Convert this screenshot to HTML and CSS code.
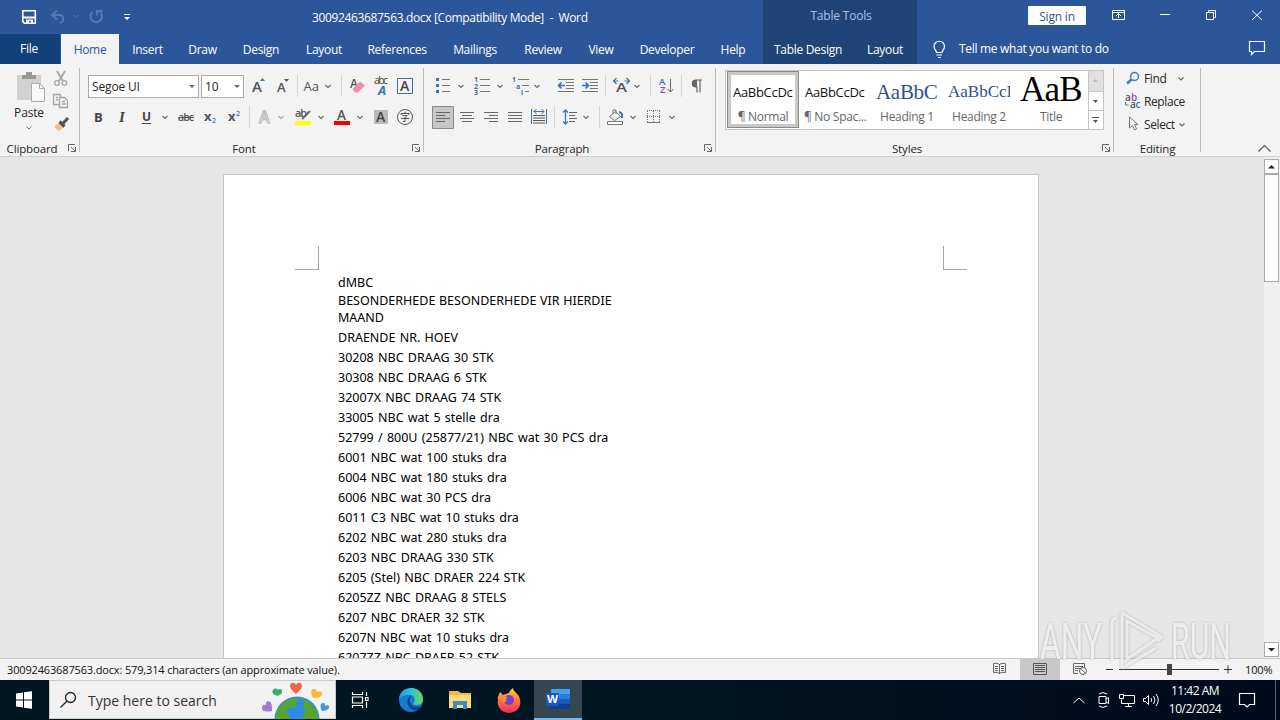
FILE: index.html
```html
<!DOCTYPE html>
<html lang="en"><head><meta charset="utf-8"><title>Word</title><link rel="stylesheet" href="styles.css"></head>
<body>
<header class="head">
 <div class="titlebar">
  <svg width="48" height="34" viewBox="0 0 48 34"><path d="M22.800 10.800h12.500v12.500H24.500l-1.700-1.700z" fill="none" stroke="#fff" stroke-width="1.600"/><path d="M22.500 16.500h13v2h-13zM26 19.500h7V23h-2v-2h-2v2h-3z" fill="#fff"/></svg>
  <svg width="36" height="34" viewBox="48 0 36 34" fill="none" stroke="#5578b3" stroke-width="2"><path d="M57 10.500l-5 4.500 5 4.500M52 15h7c5 0 6 6 1 8"/><path d="M73 15l2.500 2.500L78 15" stroke-width="1"/></svg>
  <svg width="32" height="34" viewBox="84 0 32 34" fill="none" stroke="#5578b3" stroke-width="2"><path d="M92.500 12a5.800 5.800 0 1 0 7.500 0M97 15.500V11h5.500"/></svg>
  <svg width="24" height="34" viewBox="116 0 24 34" fill="#fff"><path d="M124 14h6v1h-6zM124 17h6l-3 3z"/></svg>
  <div class="doctitle">30092463687563.docx [Compatibility Mode]  -  Word</div>
  <div class="ctxtitle">Table Tools</div>
  <button class="signin">Sign in</button>
  <svg width="194" height="34" viewBox="1086 0 194 34" fill="none" stroke="#fff"><path d="M1112.500 10.500h12v9h-12zM1112.500 12.500h12M1118.500 18v-4M1116 16l2.500-2.500 2.500 2.500M1160 14.500h10M1206.500 12.500h7v7h-7zM1208.500 12v-1.500h7v7h-2M1252 10.500l10 9.500M1262 10.500l-10 9.500"/></svg>
 </div>
 <nav class="tabs">
  <span class="file">File</span><span class="home">Home</span><span style="width:57px">Insert</span><span style="width:53px">Draw</span><span style="width:64px">Design</span><span style="width:62px">Layout</span><span style="width:84px">References</span><span style="width:72px">Mailings</span><span style="width:64px">Review</span><span style="width:52px">View</span><span style="width:80px">Developer</span><span style="width:52px">Help</span>
  <div class="ctx"><span style="width:90px">Table Design</span><span style="width:64px">Layout</span></div>
  <svg width="42" height="30" viewBox="917 34 42 30" fill="none" stroke="#fff" stroke-width="1.200"><path d="M936.500 52.500c0-2-2.500-3-2.500-6a5 5 0 0 1 10.500 0c0 3-2.500 4-2.500 6zM936.500 55h5.500M938 57.500h3"/></svg>
  <em>Tell me what you want to do</em>
  <svg width="40" height="30" viewBox="1240 34 40 30" fill="none" stroke="#fff" stroke-width="1.200"><path d="M1249.500 41.500h15v10h-10l-3 3v-3h-2z"/></svg>
 </nav>
</header>
<section class="ribbon">
 <div class="group clip"><div class="gbody cols">
   <div class="paste"><svg width="50" height="42" viewBox="4 64 50 42"><path d="M17 75h24v25H17z" fill="#d3d0d0"/><path d="M22 75h14v4H22zM26 72h6v4h-6z" fill="#999"/><path d="M31.500 83.500h8l5 5v13h-13z" fill="#fafafa" stroke="#aaa"/><path d="M39.500 83.500v5h5" fill="none" stroke="#aaa"/></svg><b>Paste</b><svg width="50" height="12" viewBox="4 122 50 12"><path d="M26.500 126.500l2.500 2.500 2.500-2.500" fill="none" stroke="#777"/></svg></div>
   <svg width="25" height="76" viewBox="50 64 25 76" fill="none" stroke="#a5a5a5" stroke-width="1.300"><path d="M57 71l6 10M65 71l-6 10" stroke-width="1.800"/><circle cx="57" cy="83" r="2.300"/><circle cx="64.500" cy="83" r="2.300"/><path d="M59 104.500h-5.500v-10h6l2 2M56 97.500h2M56 100h2M59.500 97.500h5l3 3v7h-8zM62 101.500h3M62 104h4"/><path d="M54.500 126l5-3 4 4-4 4q-4-1-5-5z" fill="#efc281" stroke="none"/><path d="M59.500 121.500l5 5M62.500 124l5.500-6" stroke="#555" stroke-width="3.200"/></svg>
  </div><div class="glabel"><span>Clipboard</span><svg class="launch" viewBox="0 0 16 16"><path d="M4.500 11V4.500H11M7 7l4 4M11.500 7v4.500H7"/></svg></div></div>
 <div class="group font"><div class="gbody">
   <div class="row r1"><div class="combo name"><span>Segoe UI</span><i></i></div><div class="combo size"><span>10</span><i></i></div>
    <svg width="54" height="24" viewBox="244 74 54 24" font-weight="600" fill="#555"><text x="252" y="92" font-size="15">A</text><text x="277" y="92" font-size="13">A</text><path d="M260 81l2.500-3 2.500 3z" fill="#4472c4"/><path d="M284 79h5l-2.500 3z"/><path d="M297.500 75v22" stroke="#d5d5d5"/></svg>
    <svg width="45" height="24" viewBox="298 74 45 24"><text x="303.500" y="91" font-size="13" font-weight="500" fill="#555">Aa</text><path d="M325.500 85l2.500 2.500 2.500-2.500" class="car"/><path d="M341.500 75v22" stroke="#d5d5d5"/></svg>
    <svg width="26" height="24" viewBox="343 74 26 24"><text x="350" y="88" font-size="12" font-weight="600" fill="#555">A</text><path d="M352.500 89l7.500-7.500 5 4-7 7h-3z" fill="#ef8da5"/></svg>
    <svg width="25" height="24" viewBox="369 74 25 24"><text x="374" y="84" font-size="10.500" fill="#444" textLength="14">abc</text><text x="378" y="94.500" font-size="13" font-weight="700" font-style="italic" fill="#3a74b4">A</text></svg>
    <svg width="24" height="24" viewBox="394 74 24 24"><path d="M397.500 78.500h15v15h-15z" fill="none" stroke="#3f6ca8"/><text x="400" y="91" font-size="14" font-weight="600" fill="#444">A</text></svg></div>
   <div class="row r2">
    <svg width="84" height="24" viewBox="88 105 84 24" fill="#444" font-weight="700" font-size="13"><text x="94" y="121.500">B</text><text x="119" y="122" font-style="italic" font-family="Liberation Serif" font-size="15">I</text><text x="142" y="121" font-size="12">U</text><path d="M142 123.500h9" stroke="#444"/><path d="M162.500 116l2.500 2.500 2.500-2.500" class="car"/></svg>
    <svg width="80" height="24" viewBox="172 105 80 24" fill="#555" font-weight="600"><text x="178" y="121" font-size="10.500" textLength="16">abc</text><path d="M178 117.500h16" stroke="#555"/><text x="204" y="121" font-size="13" font-weight="700">x</text><text x="212" y="123" font-size="7" fill="#3a74b4">2</text><text x="228" y="121" font-size="13" font-weight="700">x</text><text x="236" y="115.500" font-size="7" fill="#3a74b4">2</text><path d="M249.500 106v22" stroke="#d5d5d5"/></svg>
    <svg width="36" height="24" viewBox="252 105 36 24"><text x="259" y="122.500" font-size="16" font-weight="600" fill="#eee" stroke="#b5b5b5">A</text><path d="M278.500 116l2.500 2.500 2.500-2.500" class="car" opacity=".5"/></svg>
    <svg width="40" height="24" viewBox="288 105 40 24"><text x="295" y="117" font-size="11" font-weight="600" fill="#555" textLength="12">ab</text><path d="M302 119l8-8" stroke="#666" stroke-width="2"/><path d="M295 121h16v4h-16z" fill="#ff0"/><path d="M318.500 116l2.500 2.500 2.500-2.500" class="car"/></svg>
    <svg width="42" height="24" viewBox="328 105 42 24"><text x="337" y="120" font-size="13.500" font-weight="600" fill="#555">A</text><path d="M334 121h16v4h-16z" fill="#f00000"/><path d="M357.500 116l2.500 2.500 2.500-2.500" class="car"/></svg>
    <svg width="24" height="24" viewBox="370 105 24 24"><path d="M374 110h14v14h-14z" fill="#bbb"/><text x="376" y="122" font-size="14" font-weight="600" fill="#444">A</text></svg>
    <svg width="24" height="24" viewBox="394 105 24 24"><circle cx="405" cy="117" r="7.500" fill="none" stroke="#555"/><text x="400" y="120.500" font-size="10" font-family="Noto Sans CJK SC" fill="#333">字</text></svg></div>
  </div><div class="glabel"><span>Font</span><svg class="launch" viewBox="0 0 16 16"><path d="M4.500 11V4.500H11M7 7l4 4M11.500 7v4.500H7"/></svg></div></div>
 <div class="group para"><div class="gbody">
   <div class="row r1">
    <svg width="40" height="24" viewBox="430 74 40 24" fill="none" stroke="#777"><path d="M442 79.500h8M442 85.500h8M442 91.500h8"/><path d="M436 79.500h3M436 85.500h3M436 91.500h3" stroke="#3a6fb0" stroke-width="3"/><path d="M458.500 85l2.500 2.500 2.500-2.500" class="car"/></svg>
    <svg width="38" height="24" viewBox="470 74 38 24" font-size="7" font-weight="700" fill="#3a6fb0"><text x="474" y="82">1</text><text x="474" y="88.500">2</text><text x="474" y="95">3</text><path d="M480 79.500h10M480 85.500h10M480 91.500h10" stroke="#777"/><path d="M497.500 85l2.500 2.500 2.500-2.500" class="car"/></svg>
    <svg width="44" height="24" viewBox="508 74 44 24" font-size="7" font-weight="700" fill="#3a6fb0"><text x="512" y="82">1</text><text x="516" y="88.500">a</text><text x="521" y="95">i</text><path d="M518 79.500h11M522 85.500h7M525 91.500h4" stroke="#777"/><path d="M534.500 85l2.500 2.500 2.500-2.500" class="car"/></svg>
    <svg width="52" height="24" viewBox="552 74 52 24" fill="none" stroke="#777"><path d="M558 79.500h16M566 82.500h8M566 85.500h8M566 88.500h8M558 91.500h16M582 79.500h16M590 82.500h8M590 85.500h8M590 88.500h8M582 91.500h16"/><path d="M565 85.500h-6m2.500-3l-3 3 3 3M582 85.500h6m-2.500-3l3 3-3 3" stroke="#3a74b4" stroke-width="1.700"/></svg>
    <svg width="44" height="24" viewBox="604 74 44 24"><path d="M605.500 75v22" stroke="#d5d5d5"/><text x="616" y="92" font-size="13" font-weight="600" fill="#555" textLength="11" lengthAdjust="spacingAndGlyphs">A</text><path d="M616.500 78l-3 3 3 3M613.500 81h5M626.500 78l3 3-3 3M629.500 81h-5" fill="none" stroke="#3a74b4" stroke-width="1.200"/><path d="M634.500 85l2.500 2.500 2.500-2.500" class="car"/></svg>
    <svg width="34" height="24" viewBox="648 74 34 24" font-size="9.500" font-weight="600"><path d="M650.500 75v22M681.500 75v22" stroke="#d5d5d5"/><text x="659" y="84.500" fill="#3a6fb0">A</text><text x="660" y="93" fill="#8854b5">Z</text><path d="M670.500 79v13m-2.800-3l2.800 3 2.800-3" fill="none" stroke="#666"/></svg>
    <svg width="30" height="24" viewBox="682 74 30 24"><path d="M702 80h-6a3.500 3.500 0 0 0 0 7h1v5.500M700 80v12.500" fill="none" stroke="#666" stroke-width="1.200"/><path d="M697 80h-2a3 3.500 0 0 0 0 7h2z" fill="#666"/></svg>
   </div>
   <div class="row r2">
    <svg width="26" height="24" viewBox="430 105 26 24" fill="none" stroke="#666"><path d="M432.500 106.500h21v22h-21z" fill="#c6c6c6" stroke="#8b8b8b"/><path d="M436 112.500h14M436 115.500h9M436 118.500h14M436 121.500h9"/></svg>
    <svg width="72" height="24" viewBox="456 105 72 24" stroke="#666"><path d="M460 112.500h14M462 115.500h10M460 118.500h14M462 121.500h10M484 112.500h14M489 115.500h9M484 118.500h14M489 121.500h9M508 112.500h14M508 115.500h14M508 118.500h14M508 121.500h14"/></svg>
    <svg width="26" height="24" viewBox="528 105 26 24" fill="none" stroke="#555"><path d="M533 115.500h12M533 118h12M533 120.500h12M533 123h12"/><path d="M531.500 109v15M546.500 109v15M534 111.500h10m-2.500-2.500l2.500 2.500-2.500 2.500M536.500 109l-2.500 2.500 2.500 2.500" stroke="#3a74b4"/></svg>
    <svg width="46" height="24" viewBox="554 105 46 24" fill="none" stroke="#666"><path d="M554.500 106v22M599.500 106v22" stroke="#d5d5d5"/><path d="M569 112.500h8M569 115.500h6M569 118.500h8M569 121.500h6"/><path d="M565.500 110v14m-2.500-11.500l2.500-2.500 2.500 2.500m-5 9l2.500 2.500 2.500-2.500" stroke="#3a74b4" stroke-width="1.300"/><path d="M583.500 116l2.500 2.500 2.500-2.500" class="car"/></svg>
    <svg width="44" height="24" viewBox="600 105 44 24" fill="none" stroke="#777"><path d="M609.500 116.500l6-5 5 5-6 4zM613 114v-4h3v4"/><path d="M619 112q4 1 3 6" stroke="#3a6fb0" stroke-width="2"/><path d="M607.500 121.500h15v3h-15z" fill="#fff"/><path d="M630.500 116l2.500 2.500 2.500-2.500" class="car"/></svg>
    <svg width="42" height="24" viewBox="644 105 42 24" fill="none" stroke="#777"><path d="M647.500 111v12M659.500 111v12M647 110.500h13M653.500 111v12M647 116.500h13" stroke-dasharray="1 1"/><path d="M647 122.500h13"/><path d="M669.500 116l2.500 2.500 2.500-2.500" class="car"/></svg>
   </div>
  </div><div class="glabel"><span>Paragraph</span><svg class="launch" viewBox="0 0 16 16"><path d="M4.500 11V4.500H11M7 7l4 4M11.500 7v4.500H7"/></svg></div></div>
 <div class="group styles"><div class="gbody">
   <div class="gallery">
    <div class="style sel"><p>AaBbCcDc</p><span>¶ Normal</span></div><div class="style"><p>AaBbCcDc</p><span>¶ No Spac...</span></div><div class="style h1"><p>AaBbC</p><span>Heading 1</span></div><div class="style h2"><p>AaBbCcI</p><span>Heading 2</span></div><div class="style ti"><p>AaB</p><span>Title</span></div>
    <svg width="15" height="58" viewBox="1088 71 15 58"><path d="M1088 71h15v20h-15z" fill="#e1e1e1"/><path d="M1088.500 71v58M1088 91.500h15M1088 110.500h15" stroke="#c6c6c6"/><path d="M1093 82h5l-2.500-3z" fill="#bbb"/><path d="M1093 100h5l-2.500 3zM1092 117h7v1h-7zM1093 120h5l-2.500 3z" fill="#555"/></svg>
   </div>
  </div><div class="glabel"><span>Styles</span><svg class="launch" viewBox="0 0 16 16"><path d="M4.500 11V4.500H11M7 7l4 4M11.500 7v4.500H7"/></svg></div></div>
 <div class="group edit"><div class="gbody list">
   <div><svg width="30" height="23" viewBox="1114 67 30 23" fill="none" stroke="#4179b8"><circle cx="1134.500" cy="76.500" r="4" stroke-width="1.500"/><path d="M1131.500 79.500l-4.500 4" stroke-width="2.500"/></svg><span style="width:31px">Find</span><svg width="12" height="23" viewBox="1175 67 12 23"><path d="M1178.500 77.500l2.500 2.500 2.500-2.500" class="car"/></svg></div>
   <div><svg width="30" height="23" viewBox="1114 90 30 23" font-size="10" font-weight="600"><text x="1125" y="101" fill="#555">a</text><text x="1131" y="101" fill="#9052b3">b</text><text x="1130" y="108" fill="#555">a</text><text x="1135.500" y="108" fill="#3a74b4">c</text><path d="M1125.500 102v3h3" fill="none" stroke="#3a74b4"/></svg><span>Replace</span></div>
   <div><svg width="30" height="23" viewBox="1114 113 30 23"><path d="M1129.500 117v11l3-2.500 2 4.500 2-1-2-4.500h3.500z" fill="#fff" stroke="#777"/></svg><span style="width:32px">Select</span><svg width="12" height="23" viewBox="1176 113 12 23"><path d="M1179.500 123.500l2.500 2.500 2.500-2.500" class="car"/></svg></div>
  </div><div class="glabel"><span>Editing</span></div></div>
 <svg class="collapse" width="26" height="16" viewBox="1254 140 26 16"><path d="M1258.500 151.500l6-6 6 6" fill="none" stroke="#555" stroke-width="1.200"/></svg>
</section>
<main class="work">
 <div class="paper">
  <div class="marks"><i></i><i class="r"></i></div>
  <div class="text">
   <p class="a">dMBC</p><p class="b">BESONDERHEDE BESONDERHEDE VIR HIERDIE<br>MAAND</p><p>DRAENDE NR. HOEV</p><p>30208 NBC DRAAG 30 STK</p><p>30308 NBC DRAAG 6 STK</p><p>32007X NBC DRAAG 74 STK</p><p>33005 NBC wat 5 stelle dra</p><p>52799 / 800U (25877/21) NBC wat 30 PCS dra</p><p>6001 NBC wat 100 stuks dra</p><p>6004 NBC wat 180 stuks dra</p><p>6006 NBC wat 30 PCS dra</p><p>6011 C3 NBC wat 10 stuks dra</p><p>6202 NBC wat 280 stuks dra</p><p>6203 NBC DRAAG 330 STK</p><p>6205 (Stel) NBC DRAER 224 STK</p><p>6205ZZ NBC DRAAG 8 STELS</p><p>6207 NBC DRAER 32 STK</p><p>6207N NBC wat 10 stuks dra</p><p>6207ZZ NBC DRAER 52 STK</p>
  </div>
 </div>
 <div class="scroll"><span class="arr"><svg width="13" height="13"><path d="M3 8.500h7L6.500 5z" fill="#222"/></svg></span><span class="thumb"></span><span class="track"></span><span class="arr"><svg width="13" height="13"><path d="M3 5h7L6.500 8.500z" fill="#222"/></svg></span></div>
</main>
<footer class="status"><span class="chars">30092463687563.docx: 579,314 characters (an approximate value).</span>
 <svg width="40" height="21" viewBox="980 659 40 21" fill="none" stroke="#666"><path d="M993.500 663.500q4-1 6 1 2-2 6-1v9q-4-1-6 1-2-2-6-1zM999.500 664v10M995 666.500h3M995 668.500h3M995 670.500h3M1001 666.500h3M1001 668.500h3M1001 670.500h3"/></svg>
 <svg class="on" width="40" height="21" viewBox="1020 659 40 21" fill="none" stroke="#555"><path d="M1033.500 663.500h13v11h-13zM1035 665.500h10M1035 667.500h10M1035 669.500h10M1035 671.500h10"/></svg>
 <svg width="40" height="21" viewBox="1060 659 40 21" fill="none" stroke="#666"><path d="M1078 673.500h-4.500v-10h11v4M1075 666.500h8M1075 668.500h5M1075 670.500h3"/><circle cx="1083" cy="671" r="3.500"/><path d="M1080.500 668.500l5 5"/></svg>
 <svg width="140" height="21" viewBox="1100 659 140 21" stroke="#333"><path d="M1106 669.500h7M1119 669.500h100M1224 669.500h8M1228 665.500v8"/><path d="M1167 664h5v11h-5z" fill="#444" stroke="none"/></svg>
 <span class="pct">100%</span></footer>
<div class="taskbar">
 <svg width="49" height="40" viewBox="0 680 49 40" fill="#fff"><path d="M16 693.500l7-1v7h-7zM24 692.300l8-1.100v8.300h-8zM16 700.500h7v7l-7-1zM24 700.500h8v8.300l-8-1.100z"/></svg>
 <div class="search"><svg width="38" height="38" viewBox="50 681 38 38" fill="none" stroke="#222" stroke-width="1.300"><circle cx="70.500" cy="697.500" r="5"/><path d="M67 701l-6.500 6.500"/></svg><span>Type here to search</span>
  <svg width="76" height="38" viewBox="259 681 76 38"><circle cx="297" cy="719" r="22.500" fill="#2f8be5"/><path d="M277 710l8-9 9-3 5 2-4 4 2 3-8 1-4 4 5 3-1 5h-14zM300 698l8 3 9 9 2 12h-12l-5-7 4-4-4-5 3-3z" fill="#58a52d"/><path d="M296 694c-3-3-6-5-6-8 0-4 5-4 6-1 1-3 6-3 6 1 0 3-3 5-6 8z" fill="#f2644b"/><path d="M278 696c-4-1-7-3-5-6 1-2 4-2 5 0 1-2 5-1 4 2 0 2-3 3-4 4z" fill="#36ad72"/><path d="M313 698c-2-4-3-9 1-9 2 0 3 1 3 3 3-2 6 0 5 3-2 3-6 3-9 3z" fill="#f9bd32"/><path d="M272 711c-5 1-10 1-10-3 0-3 2-4 4-3-1-4 3-5 5-2 1 2 1 5 1 8z" fill="#a279d0"/><path d="M322 711c-2-4-2-8 1-8 2 0 2 1 2 3 3-2 5 0 4 2-1 2-4 3-7 3z" fill="#3d9be0"/></svg></div>
 <svg width="50" height="40" viewBox="336 680 50 40" fill="none" stroke="#fff" stroke-width="1.200"><path d="M352.500 692v2.500h10V692M352.500 697h10v6h-10zM352.500 708v-2.500h10v2.500M366.500 692v4M366.500 702v6M365.500 697.500h2.500v3h-2.500z"/></svg>
 <svg width="50" height="40" viewBox="386 680 50 40"><defs><linearGradient id="e" x1="0" x2="1"><stop stop-color="#1d9bde"/><stop offset=".5" stop-color="#2cc3d3"/><stop offset="1" stop-color="#65d957"/></linearGradient><linearGradient id="f" y1="0" y2="1" x2="0"><stop stop-color="#ffd33a"/><stop offset=".5" stop-color="#ff753b"/><stop offset="1" stop-color="#ee2a69"/></linearGradient></defs><circle cx="411" cy="700" r="12" fill="#157bd0"/><path d="M399 699c1-14 23-15 24 0 0 6-6 7-10 5 3-3 2-8-2-9-5-1-9 1-12 4z" fill="url(#e)"/><path d="M411 695c-5 3-5 12 2 15 3 1 7-1 9-4-5 2-10 1-12-4-1-2 0-4 1-5z" fill="#0f3e8a"/></svg>
 <svg width="49" height="40" viewBox="436 680 49 40"><path d="M449 691h9l3 2h10v15h-22z" fill="#f5bb3c"/><path d="M449 695h22v13h-22z" fill="#ffdb76"/><path d="M453 701h14v8h-4v-4h-6v4h-4z" fill="#3a8cc9"/></svg>
 <svg width="49" height="40" viewBox="485 680 49 40"><path d="M500 692l3 3 6-2c1-3 3-4 4-5 0 4 7 6 7 12a11.300 10.500 0 1 1-22 0c-1-3 1-5 2-8z" fill="url(#f)"/><circle cx="509" cy="700" r="5" fill="#7142c7"/><path d="M500 696c3-1 6 0 8 2-2 0-3 2-1 3-3 3-6-1-7-5z" fill="#ff873b"/></svg>
 <div class="app"><svg width="48" height="38" viewBox="534 680 48 38"><path d="M551 689h19v5h-19z" fill="#41a5ee"/><path d="M551 694h19v5h-19z" fill="#2b7cd3"/><path d="M551 699h19v5h-19z" fill="#185abd"/><path d="M551 704h19v5h-19z" fill="#103f91"/><rect x="546" y="693" width="13" height="13" rx="1" fill="#185abd"/><text x="547" y="703" font-size="10" font-weight="700" fill="#fff" textLength="11" lengthAdjust="spacingAndGlyphs">W</text></svg></div>
 <div class="grow"></div>
 <svg width="98" height="40" viewBox="1067 680 98 40" fill="none" stroke="#fff"><path d="M1073.500 703l5.500-5 5.500 5M1099 696.500h7v7h-7zM1106 699l2.500-1.500v6l-2.500-1.500M1099 694q4-3 8 0M1099 706q4 3 8 0M1123.500 695.500h11v8h-13v-4M1119.500 694.500h4v4h-4zM1128.500 704v2.500M1125 706.500h7M1143.500 698.500h2l3-3v9l-3-3h-2zM1151 698q1.500 2 0 4M1153.500 696q3 4 0 8M1156 694q4.500 6 0 12"/></svg>
 <div class="clock"><span>11:42 AM</span><span>10/2/2024</span></div>
 <svg width="55" height="40" viewBox="1225 680 55 40" fill="none" stroke="#fff" stroke-width="1.200"><path d="M1239.500 693.500h15v11h-5l-2.500 2.500-2.500-2.500h-5z"/><path d="M1275.500 680v40" stroke="#596570" stroke-width="1"/></svg>
</div>
<svg class="wm" width="210" height="70" viewBox="1034 602 210 70"><g fill="#fff" fill-opacity=".75" font-family="Roboto" font-weight="400" font-size="50"><text x="1040" y="659" textLength="62" lengthAdjust="spacingAndGlyphs">ANY</text><text x="1171" y="659" textLength="60" lengthAdjust="spacingAndGlyphs">RUN</text></g><path d="M1117 618q-5 0-5 6v36M1122 668v-55l40 24-5 4M1122 668l34-20M1127 621l31 17-31 21z" fill="none" stroke="#fff" stroke-opacity=".7" stroke-width="3" stroke-linejoin="round"/></svg>
</body></html>
```

FILE: styles.css
```css
*{box-sizing:border-box}
body{margin:0;width:1280px;height:720px;overflow:hidden;display:flex;flex-direction:column;position:relative;font:12px/16px "Open Sans","Noto Sans",sans-serif;color:#262626;background:#e6e6e6}
svg{display:block;flex:none;letter-spacing:0}
p{margin:0}
svg text{white-space:pre}
.car{fill:none;stroke:#666;stroke-width:1.1}
.head{background:#2b579a;color:#fff;flex:none}
.titlebar{height:34px;display:flex;letter-spacing:-.35px}
.doctitle{width:623px;padding:10px 0 0 172px;white-space:pre}
.ctxtitle{width:154px;padding:8px 0 0 2px;margin-right:111px;text-align:center;background:#214478;color:#a8c0e4;letter-spacing:-.2px}
.signin{width:58px;height:19px;margin-top:6px;border:0;border-radius:1px;background:#fff;color:#2b579a;font:12px/19px "Open Sans",sans-serif;padding:1px 0 0;flex:none;letter-spacing:-.2px}
.tabs{height:30px;display:flex;line-height:31px;letter-spacing:-.3px}
.tabs span{flex:none;text-align:center;white-space:nowrap}
.tabs .file{width:60px;height:30px;background:#124078;line-height:29px;padding-right:2px}
.tabs .home{width:58px;margin-left:1px;background:#f3f3f3;color:#2b579a}
.ctx{display:flex;background:#214478;width:154px;margin-left:4px}
.tabs em{font-style:normal;flex:1;line-height:30px}
.ribbon{height:93px;flex:none;display:flex;background:#f3f3f3;border-bottom:1px solid #d0d0d0;letter-spacing:-.15px}
.group{display:flex;flex-direction:column;height:92px;background:linear-gradient(#bdbdbd,#bdbdbd) no-repeat;background-size:1px 84px;background-position:right 0 top 4px}
.clip{width:80px}.font{width:344px}.para{width:292px}.styles{width:398px}.edit{width:87px}
.gbody{height:76px}
.cols{display:flex;padding-left:4px}
.paste{width:50px;text-align:center;margin-right:-4px}
.paste b{font-weight:400;display:block;height:16px;line-height:14px}
.glabel{display:flex;height:16px;line-height:17px;text-align:center;font-size:11.5px}
.glabel span{flex:1}
.launch{width:16px;height:16px;fill:none;stroke:#666}
.row{display:flex}
.r1{padding-top:10px;height:41px}
.font .row{padding-left:8px}
.para .row{padding-left:6px}
.combo{height:23px;margin-top:1px;border:1px solid #ababab;background:#fff;display:flex;align-items:center;justify-content:space-between;padding:0 3px}
.name{width:111px;margin-right:2px}
.size{width:43px}
.combo i{border:3px solid transparent;border-top-color:#666;border-bottom:0}
.gallery{display:flex;margin:6px 0 0 9px;width:379px;height:60px;background:#fff;border:1px solid #c6c6c6;padding-left:1px}
.gallery svg{margin-left:auto}
.style{width:72px;height:58px;padding:0 5px;text-align:center;color:#666}
.style.sel{border:1px solid #8b8b8b;box-shadow:inset 0 0 0 3px #c8c8c8;height:57px;padding:0 4px}
.style p{height:37px;overflow:hidden;white-space:nowrap;color:#111;text-align:left;font-size:13px;line-height:42px;margin-left:1px;letter-spacing:-.3px}
.style.sel p,.style.sel span{position:relative;top:-1px}
.style span{display:block;line-height:17px;white-space:nowrap;letter-spacing:-.3px}
.style.h1 p,.style.h2 p{color:#2f5485;font-family:"Liberation Serif",serif;font-size:21px;margin-left:0}
.style.h2 p{font-size:17px;letter-spacing:0}
.style.ti p{font:35px/26px "Liberation Serif",serif;height:25px;margin:6px 0 6px;color:#000;letter-spacing:-.8px}
.list{padding-top:3px}
.list>div{display:flex;height:23px;line-height:23px;letter-spacing:-.4px}
.collapse{margin:76px 0 0 auto}
.work{height:501px;flex:none;display:flex;justify-content:flex-end;overflow:hidden}
.paper{width:816px;height:600px;margin:17px 225px 0 0;background:#fff;border:1px solid #c6c6c6;padding:71px 71px 0}
.marks{display:flex;justify-content:space-between}
.marks i{width:24px;height:24px;border:solid #a6a6a6;border-width:0 1px 1px 0}
.marks .r{border-width:0 0 1px 1px}
.text{padding:4px 0 0 43px;color:#000;font:12.5px/20px "Noto Sans",sans-serif;white-space:nowrap;word-spacing:1px}
.text .a{line-height:18px}
.text .b{line-height:17px;margin-bottom:2px;word-spacing:.4px}
.scroll{width:16px;height:501px;display:flex;flex-direction:column;background:#f0f0f0;padding:2px 1px 1px 0}
.arr{height:15px;border:1px solid #aaa;background:#fff}
.thumb{height:108px;border:1px solid #aaa;background:#fff}
.track{flex:1}
.status{height:22px;flex:none;display:flex;background:#f3f3f3;border-top:1px solid #c6c6c6;font-size:11px;line-height:21px;color:#111;letter-spacing:-.15px}
.chars{width:980px;padding-left:7px}
.pct{padding-left:5px}
.on{background:#c8c8c8}
.taskbar{height:40px;flex:none;display:flex;background:linear-gradient(90deg,#001721,#001522 50%,#000a1c);color:#fff}
.search{width:287px;height:39px;background:#f2f2f2;border:1px solid #ccc;display:flex;color:#333;font-size:14px;line-height:39px}
.search span{flex:1}
.app{width:48px;height:40px;background:#374751;border-bottom:2px solid #76b9ed}
.grow{flex:1}
.clock{width:60px;text-align:center;display:flex;flex-direction:column;line-height:18px;padding-top:2px;letter-spacing:-.5px}
.wm{position:absolute;left:1034px;top:602px;filter:drop-shadow(0 0 1px #999)}
```
